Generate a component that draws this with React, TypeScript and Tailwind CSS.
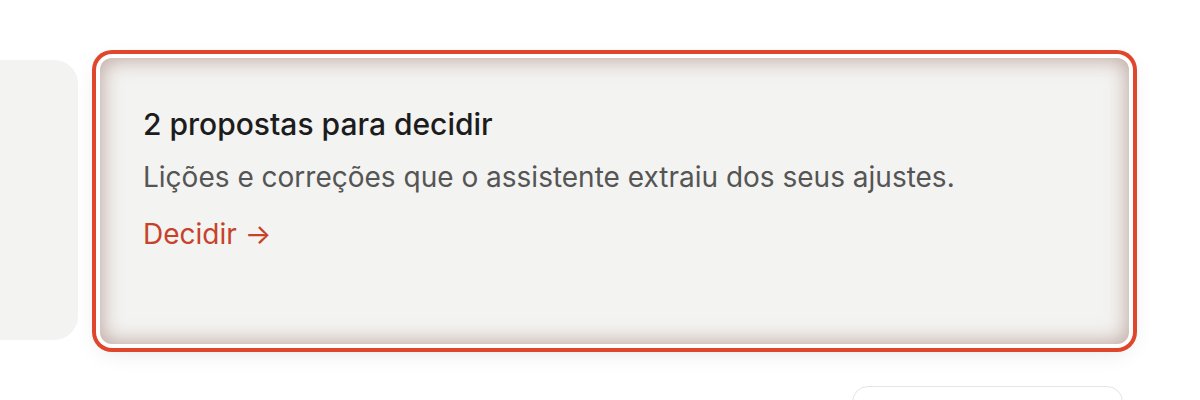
import React from "react";

export default function App() {
  return (
    <div
      className="w-[1200px] h-[400px] bg-white overflow-hidden pt-[58px]"
      style={{ fontFamily: "Inter, 'Noto Sans', sans-serif" }}
    >
      <div className="flex items-start">
        <div className="mt-[2px] h-[280px] w-[78px] shrink-0 rounded-r-[24px] bg-[#f3f3f1]" />
        <div className="ml-[22px] h-[286px] w-[1029px] shrink-0 rounded-[12px] bg-[#f3f3f1] px-[43px] pt-[48px] shadow-[inset_0_0_20px_2px_rgba(150,105,95,0.55),0_0_0_4px_#ffffff,0_0_0_8px_#e0462c,0_6px_24px_rgba(0,0,0,0.12)]">
          <div className="text-[30px] leading-[36px] font-medium text-[#1c1c1c]">
            2 propostas para decidir
          </div>
          <div className="mt-[17px] text-[28px] leading-[36px] text-[#555555]">
            Lições e correções que o assistente extraiu dos seus ajustes.
          </div>
          <div className="mt-[21px] text-[28px] leading-[36px] text-[#c7422b]">
            Decidir →
          </div>
        </div>
      </div>
      <div className="flex justify-end pr-[77px] mt-[42px]">
        <div className="h-[60px] w-[271px] rounded-[16px] border border-[#e4e4e2] bg-white" />
      </div>
    </div>
  );
}
